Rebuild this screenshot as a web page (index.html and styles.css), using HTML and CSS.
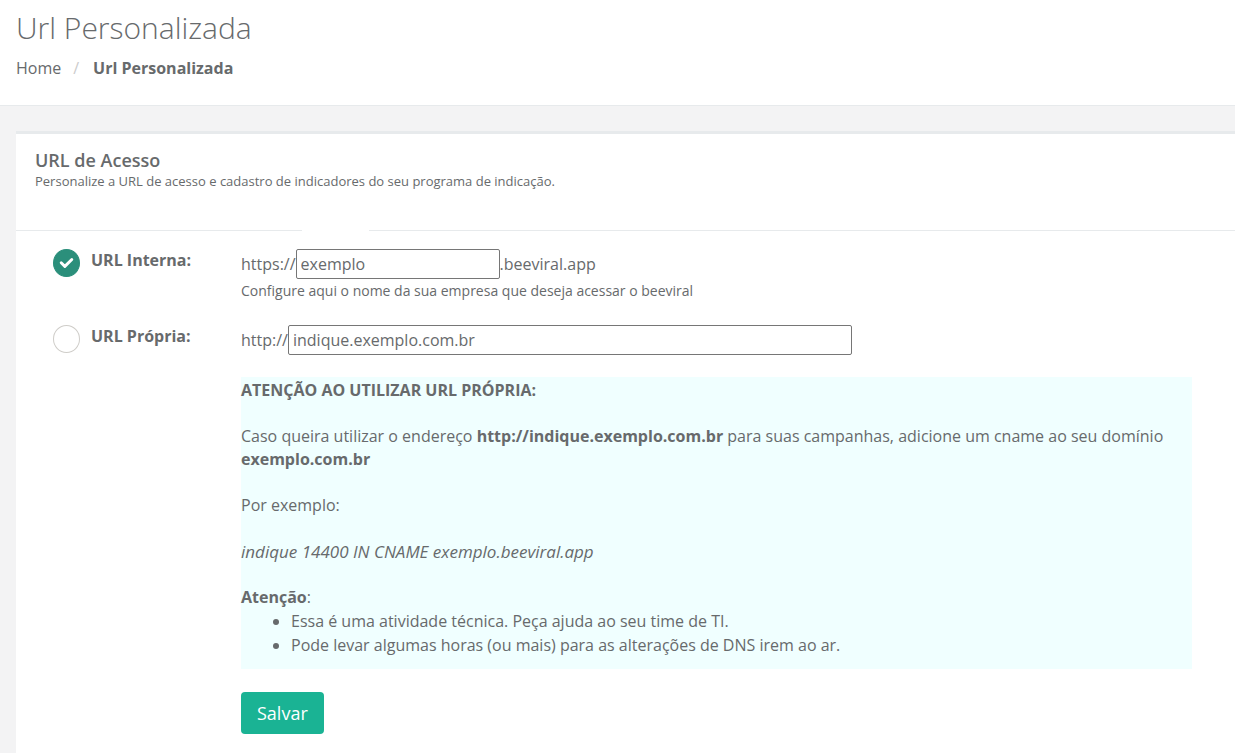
FILE: index.html
```html
<!DOCTYPE html>
<html lang="pt-BR">
<head>
<meta charset="utf-8">
<title>Url Personalizada</title>
<link rel="stylesheet" href="styles.css">
</head>
<body>
<header class="page-heading">
  <h1 class="page-title">Url Personalizada</h1>
  <nav class="breadcrumb">
    <a class="crumb" href="#">Home</a>
    <span class="crumb-sep">/</span>
    <strong>Url Personalizada</strong>
  </nav>
</header>
<main class="content">
  <section class="panel">
    <div class="panel-title">
      <h2 class="panel-name">URL de Acesso</h2>
      <p class="panel-hint">Personalize a URL de acesso e cadastro de indicadores do seu programa de indicação.</p>
    </div>
    <div class="divider"><span class="divider-start"></span><span class="divider-rest"></span></div>
    <form class="panel-body">
      <div class="row">
        <div class="option">
          <span class="check">
            <input class="radio" type="radio" name="tipo" id="interna" checked>
            <svg class="tick" viewBox="0 0 28 28" aria-hidden="true"><path d="M8.500 14.200L12.300 18L19.500 10.800"/></svg>
          </span>
          <label class="option-label" for="interna">URL Interna:</label>
        </div>
        <div class="field">
          <div class="url-line">
            <label for="sub">https://</label><input class="text-input short" id="sub" type="text" value="exemplo"><span>.beeviral.app</span>
          </div>
          <p class="help">Configure aqui o nome da sua empresa que deseja acessar o beeviral</p>
        </div>
      </div>
      <div class="row">
        <div class="option">
          <span class="check"><input class="radio" type="radio" name="tipo" id="propria"></span>
          <label class="option-label" for="propria">URL Própria:</label>
        </div>
        <div class="field">
          <div class="url-line">
            <label for="host">http://</label><input class="text-input long" id="host" type="text" value="indique.exemplo.com.br">
          </div>
          <div class="notice">
            <p><strong>ATENÇÃO AO UTILIZAR URL PRÓPRIA:</strong></p>
            <p>Caso queira utilizar o endereço <strong>http://indique.exemplo.com.br</strong> para suas campanhas, adicione um cname ao seu domínio <strong>exemplo.com.br</strong></p>
            <p>Por exemplo:</p>
            <p class="record"><em>indique 14400 IN CNAME exemplo.beeviral.app</em></p>
            <div>
              <p><strong>Atenção</strong>:</p>
              <ul class="notes">
                <li>Essa é uma atividade técnica. Peça ajuda ao seu time de TI.</li>
                <li>Pode levar algumas horas (ou mais) para as alterações de DNS irem ao ar.</li>
              </ul>
            </div>
          </div>
          <button class="save" type="submit">Salvar</button>
        </div>
      </div>
    </form>
  </section>
</main>
</body>
</html>
```
FILE: styles.css
```css
* { box-sizing: border-box; }
body {
  margin: 0;
  min-height: 100vh;
  display: flex;
  flex-direction: column;
  background: #f3f3f4;
  color: #676a6c;
  font: 16px/23px "Open Sans", sans-serif;
}
h1, h2, p, ul { margin: 0; }
strong { font-weight: 700; }
.page-heading {
  background: #fff;
  border-bottom: 1px solid #e7eaec;
  padding: 10px 16px 25px;
}
.page-title { font-size: 30px; line-height: 36px; font-weight: 300; }
.breadcrumb { display: flex; margin-top: 10px; line-height: 24px; }
.crumb { color: inherit; text-decoration: none; }
.crumb-sep { color: #ccc; margin: 0 14px 0 12px; }
.content { flex: 1; display: flex; padding: 25px 0 0 16px; }
.panel { flex: 1; background: #fff; border-top: 3px solid #e7eaec; }
.panel-title { padding: 15px 19px 38px; }
.panel-name { font-size: 18px; line-height: 22px; font-weight: 600; }
.panel-hint { font-size: 13px; line-height: 21px; }
.divider { display: flex; gap: 67px; }
.divider span { height: 1px; background: #e7eaec; }
.divider-start { width: 286px; }
.divider-rest { flex: 1; }
.panel-body {
  display: flex;
  flex-direction: column;
  gap: 22px;
  padding: 18px 43px 19px 37px;
}
.row { display: grid; grid-template-columns: 188px 1fr; }
.option { display: flex; align-items: flex-start; gap: 11px; }
.check { position: relative; display: flex; }
.radio {
  appearance: none;
  width: 27px;
  height: 28px;
  margin: 0;
  border: 1px solid #cfcdc9;
  border-radius: 50%;
  background: #fff;
}
.radio:checked { border-color: #2b8f7b; background: #2b8f7b; }
.tick {
  position: absolute;
  inset: 0;
  pointer-events: none;
  fill: none;
  stroke: #fff;
  stroke-width: 3;
  stroke-linecap: round;
  stroke-linejoin: round;
}
.option-label { font-weight: 700; }
.url-line { display: flex; align-items: center; height: 30px; }
.text-input {
  height: 30px;
  padding: 1px 4px;
  border: 1px solid #767676;
  border-radius: 2px;
  background: #fff;
  color: inherit;
  font: inherit;
}
.short { width: 204px; }
.long { width: 564px; }
.help { font-size: 14px; line-height: 24px; }
.notice {
  display: flex;
  flex-direction: column;
  gap: 23px;
  margin-top: 22px;
  padding: 2px 0 12px;
  background: #f0ffff;
}
.record { font-size: 17px; }
.notes { padding-left: 50px; line-height: 24px; }
.save {
  display: block;
  margin-top: 23px;
  padding: 8px 16px;
  border: 0;
  border-radius: 4px;
  background: #1ab394;
  color: #fff;
  font: 18px/26px "Open Sans", sans-serif;
}
```
